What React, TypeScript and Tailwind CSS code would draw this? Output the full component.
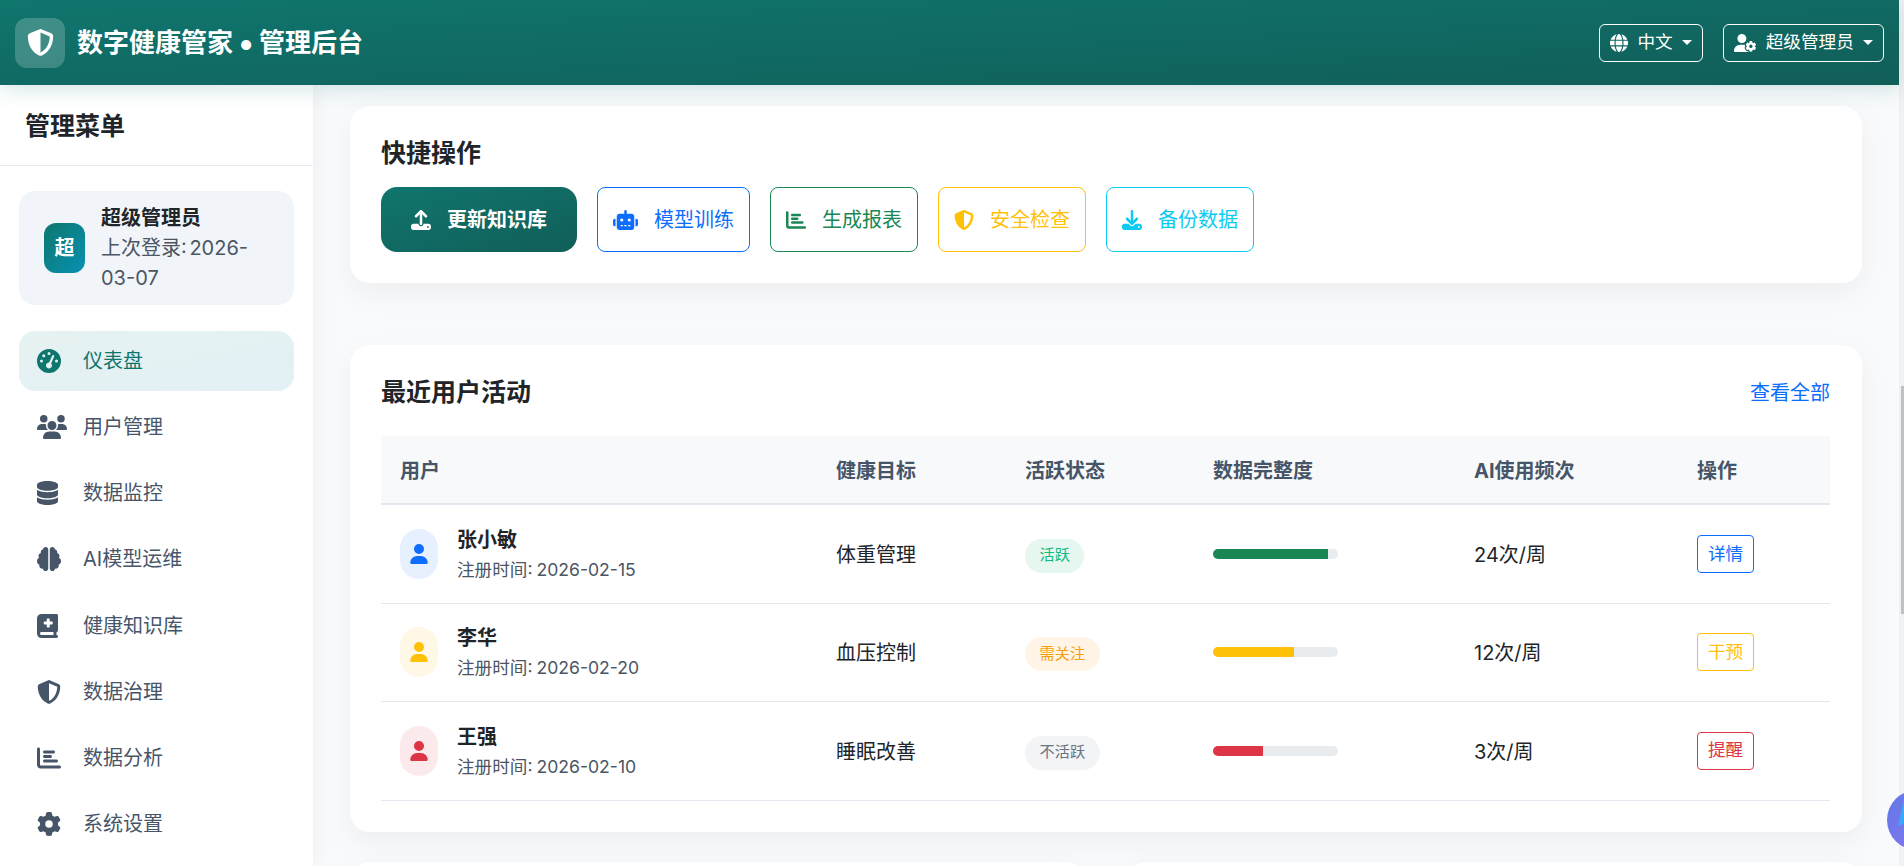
import React from "react";
import {
  FaShieldHalved, FaGlobe, FaUserGear, FaGaugeHigh, FaUsers, FaDatabase, FaBrain,
  FaBookMedical, FaChartBar, FaGear, FaUpload, FaRobot, FaDownload, FaUser,
} from "react-icons/fa6";

const nav = [
  { label: "仪表盘", Icon: FaGaugeHigh, iconCls: "w-[24px] h-[24px]", active: true },
  { label: "用户管理", Icon: FaUsers, iconCls: "w-[30px] h-[24px]" },
  { label: "数据监控", Icon: FaDatabase, iconCls: "w-[21px] h-[24px]" },
  { label: "AI模型运维", Icon: FaBrain, iconCls: "w-[24px] h-[24px]" },
  { label: "健康知识库", Icon: FaBookMedical, iconCls: "w-[21px] h-[24px]" },
  { label: "数据治理", Icon: FaShieldHalved, iconCls: "w-[24px] h-[24px]" },
  { label: "数据分析", Icon: FaChartBar, iconCls: "w-[24px] h-[24px]" },
  { label: "系统设置", Icon: FaGear, iconCls: "w-[24px] h-[24px]" },
];

const quick = [
  { label: "模型训练", Icon: FaRobot, iconCls: "w-[25px] h-[20px]", cls: "w-[153px] border-[#0d6efd] text-[#0d6efd]" },
  { label: "生成报表", Icon: FaChartBar, iconCls: "w-[20px] h-[20px]", cls: "w-[148px] border-[#198754] text-[#198754]" },
  { label: "安全检查", Icon: FaShieldHalved, iconCls: "w-[20px] h-[20px]", cls: "w-[148px] border-[#ffc107] text-[#ffc107]" },
  { label: "备份数据", Icon: FaDownload, iconCls: "w-[20px] h-[20px]", cls: "w-[148px] border-[#0dcaf0] text-[#0dcaf0]" },
];

const rows = [
  {
    name: "张小敏", date: "2026-02-15", goal: "体重管理", status: "活跃",
    statusCls: "bg-[#e6f7ef] text-[#10b981]", pct: 92, bar: "bg-[#198754]", freq: "24次/周",
    action: "详情", actionCls: "border-[#0d6efd] text-[#0d6efd]",
    avatarCls: "bg-[#e7f0ff]", iconCls: "text-[#0d6efd]", h: "h-[99px]",
  },
  {
    name: "李华", date: "2026-02-20", goal: "血压控制", status: "需关注",
    statusCls: "bg-[#fff4e5] text-[#f59e0b]", pct: 65, bar: "bg-[#ffc107]", freq: "12次/周",
    action: "干预", actionCls: "border-[#ffc107] text-[#ffc107]",
    avatarCls: "bg-[#fff8e6]", iconCls: "text-[#ffc107]", h: "h-[98px]",
  },
  {
    name: "王强", date: "2026-02-10", goal: "睡眠改善", status: "不活跃",
    statusCls: "bg-[#f3f4f6] text-[#6b7280]", pct: 40, bar: "bg-[#dc3545]", freq: "3次/周",
    action: "提醒", actionCls: "border-[#dc3545] text-[#dc3545]",
    avatarCls: "bg-[#fbe9eb]", iconCls: "text-[#dc3545]", h: "h-[99px]",
  },
];

const heads = [
  { t: "用户", w: "w-[436px]" },
  { t: "健康目标", w: "w-[189px]" },
  { t: "活跃状态", w: "w-[188px]" },
  { t: "数据完整度", w: "w-[261px]" },
  { t: "AI使用频次", w: "w-[223px]" },
  { t: "操作", w: "w-[152px]" },
];

function Caret() {
  return <span className="w-0 h-0 border-x-[5px] border-t-[5px] border-x-transparent border-t-white" />;
}

export default function App() {
  return (
    <div className="relative flex h-[866px] w-full overflow-hidden bg-[#f8fafc] font-['Inter','Noto_Sans_CJK_SC',sans-serif] text-[#212529]">
      <div className="flex min-w-0 flex-1 flex-col">
        <header className="relative z-20 flex h-[85px] shrink-0 items-center justify-between bg-gradient-to-br from-[#0f766e] to-[#115e59] px-[15px] shadow-[0_4px_20px_rgba(15,118,110,0.18)]">
          <div className="flex items-center gap-[12px]">
            <div className="flex h-[50px] w-[50px] items-center justify-center rounded-xl bg-white/20">
              <FaShieldHalved className="h-[27px] w-[27px] text-white" />
            </div>
            <span className="flex items-center text-[26px] font-bold text-white">
              数字健康管家
              <span className="inline-block w-[26px] text-center text-[32px] leading-none">•</span>
              管理后台
            </span>
          </div>
          <div className="flex items-center gap-[20px] text-[17.6px] text-white">
            <button className="flex h-[38px] w-[104px] items-center justify-center gap-[9px] rounded-md border border-white">
              <FaGlobe className="h-[18px] w-[18px]" />
              <span>中文</span>
              <Caret />
            </button>
            <button className="flex h-[38px] w-[161px] items-center justify-center gap-[9px] rounded-md border border-white">
              <FaUserGear className="h-[18px] w-[22.5px]" />
              <span>超级管理员</span>
              <Caret />
            </button>
          </div>
        </header>

        <div className="flex min-h-0 flex-1">
          <aside className="relative z-10 w-[313px] shrink-0 overflow-hidden bg-white shadow-[2px_0_20px_rgba(0,0,0,0.05)]">
            <div className="flex h-[81px] items-center border-b border-[#e5e9f2] pl-[25px] pt-[4px]">
              <h2 className="text-[25px] font-bold text-[#212529]">管理菜单</h2>
            </div>
            <div className="px-[19px] pt-[25px]">
              <div className="flex items-center gap-[16px] rounded-2xl bg-[#f1f5f9] px-[25px] py-[12px]">
                <div className="flex h-[50px] w-[41px] shrink-0 items-center justify-center rounded-xl bg-gradient-to-br from-[#0f766e] to-[#0891b2] text-[20px] font-bold text-white">
                  超
                </div>
                <div className="min-w-0 text-[20px] leading-[30px]">
                  <div className="font-bold text-[#212529]">超级管理员</div>
                  <div className="text-[#4b5563] [word-spacing:-3px]">上次登录: 2026-03-07</div>
                </div>
              </div>
              <nav className="mt-[26px] flex flex-col gap-[6.15px]">
                {nav.map(({ label, Icon, iconCls, active }) => (
                  <a
                    key={label}
                    className={
                      "flex h-[60px] items-center rounded-2xl pl-[18px] text-[20px] " +
                      (active ? "bg-gradient-to-br from-[#e6f2f1] to-[#e3f0f5] text-[#0f766e]" : "text-[#475569]")
                    }
                  >
                    <span className="flex w-[46px] shrink-0 justify-start">
                      <Icon className={"shrink-0 " + iconCls} />
                    </span>
                    <span>{label}</span>
                  </a>
                ))}
              </nav>
            </div>
          </aside>

          <main className="relative min-w-0 flex-1 overflow-hidden px-[37px] pt-[21px]">
            <section className="mb-[62px] rounded-[20px] bg-white px-[31px] pb-[31px] pt-[32px] shadow-[0_10px_30px_rgba(0,0,0,0.05)]">
              <h3 className="flex h-[29px] items-center pt-[2px] text-[25px] font-bold">快捷操作</h3>
              <div className="mt-[20px] flex gap-[20px] text-[20px]">
                <button className="flex h-[65px] w-[196px] items-center justify-center gap-[16px] rounded-2xl bg-gradient-to-br from-[#0f766e] to-[#115e59] font-bold text-white">
                  <FaUpload className="h-[20px] w-[20px]" />
                  <span>更新知识库</span>
                </button>
                {quick.map(({ label, Icon, iconCls, cls }) => (
                  <button key={label} className={"flex h-[65px] items-center justify-center gap-[16px] rounded-lg border bg-white " + cls}>
                    <Icon className={iconCls} />
                    <span>{label}</span>
                  </button>
                ))}
              </div>
            </section>

            <section className="mb-[30px] rounded-[20px] bg-white pb-[31px] pl-[31px] pr-[32px] pt-[32px] shadow-[0_10px_30px_rgba(0,0,0,0.05)]">
              <div className="mb-[30px] flex h-[29px] items-center justify-between pt-[2px]">
                <h3 className="text-[25px] font-bold">最近用户活动</h3>
                <a className="text-[20px] text-[#0d6efd]">查看全部</a>
              </div>
              <table className="w-full table-fixed border-collapse text-[20px]">
                <thead>
                  <tr className="h-[68px] border-b-2 border-[#e2e8f0] bg-[#f8f9fa]">
                    {heads.map((h) => (
                      <th key={h.t} className={"pl-[19px] pt-[2px] text-left font-bold text-[#475569] " + h.w}>{h.t}</th>
                    ))}
                  </tr>
                </thead>
                <tbody>
                  {rows.map((r) => (
                    <tr key={r.name} className={"border-b border-[#e2e8f0] " + r.h}>
                      <td className="pl-[19px]">
                        <div className="flex items-center gap-[19px]">
                          <div className={"flex h-[50px] w-[38px] shrink-0 items-center justify-center rounded-full " + r.avatarCls}>
                            <FaUser className={"h-[20px] w-[18px] " + r.iconCls} />
                          </div>
                          <div className="pt-[2px]">
                            <div className="text-[20px] font-bold leading-[30px]">{r.name}</div>
                            <div className="text-[17.6px] leading-[30px] text-[#4b5563] [word-spacing:-1px]">注册时间: {r.date}</div>
                          </div>
                        </div>
                      </td>
                      <td className="pl-[19px] pt-[2px]">{r.goal}</td>
                      <td className="pl-[19px]">
                        <span className={"mt-[4px] inline-flex h-[34px] items-center rounded-full px-[14.5px] text-[15.2px] " + r.statusCls}>{r.status}</span>
                      </td>
                      <td className="pl-[19px]">
                        <div className="h-[10px] w-[125px] overflow-hidden rounded-[5px] bg-[#e9ecef]">
                          <div className={"h-full " + r.bar} style={{ width: `${r.pct}%` }} />
                        </div>
                      </td>
                      <td className="pl-[19px] pt-[2px]">{r.freq}</td>
                      <td className="pl-[19px]">
                        <button className={"flex h-[38px] w-[57px] items-center justify-center rounded border text-[17.6px] " + r.actionCls}>{r.action}</button>
                      </td>
                    </tr>
                  ))}
                </tbody>
              </table>
            </section>

            <div className="flex gap-[42px]">
              <section className="h-[200px] flex-1 rounded-[20px] bg-white shadow-[0_10px_30px_rgba(0,0,0,0.05)]" />
              <section className="h-[200px] flex-1 rounded-[20px] bg-white shadow-[0_10px_30px_rgba(0,0,0,0.05)]" />
            </div>
          </main>
        </div>
      </div>

      <div className="h-full w-[5px] shrink-0 bg-[#f1f1f1] pl-[2px] pt-[386px]">
        <div className="h-[228px] w-[3px] bg-[#c1c1c1]" />
      </div>

      <div className="absolute left-[1887px] top-[790px] z-30 h-[60px] w-[60px] overflow-hidden rounded-full bg-gradient-to-br from-[#5f7ae8] to-[#8b72ee]">
        <svg viewBox="0 0 60 60" className="h-full w-full">
          <polygon points="17,9 11,36 17,33" fill="#38a8f8" />
        </svg>
      </div>
    </div>
  );
}
